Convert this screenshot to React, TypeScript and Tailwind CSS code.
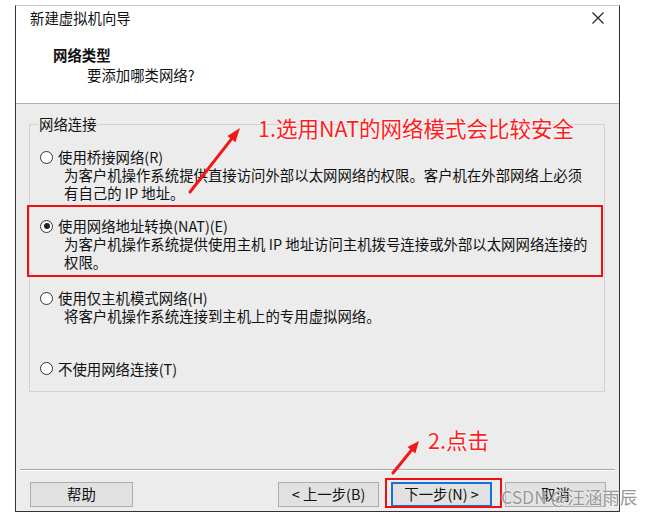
import React from 'react';

const font = "font-['Noto_Sans_CJK_SC','Noto_Sans',sans-serif]";

const Radio: React.FC<{ checked?: boolean }> = ({ checked }) => (
  <span className="w-[13px] h-[13px] rounded-full border border-[#333] bg-white flex items-center justify-center shrink-0">
    {checked && <span className="w-[6px] h-[6px] rounded-full bg-[#222]"></span>}
  </span>
);

const Option: React.FC<{ label: string; desc?: React.ReactNode; checked?: boolean }> = ({ label, desc, checked }) => (
  <div>
    <div className="flex items-center gap-[5px] leading-[16px]">
      <Radio checked={checked} />
      <span>{label}</span>
    </div>
    {desc && <div className="pl-[24px] mt-[1px] leading-[17.5px]">{desc}</div>}
  </div>
);

const Button: React.FC<{ children: React.ReactNode; primary?: boolean; wide?: boolean }> = ({ children, primary, wide }) => (
  <div
    className={`h-[25px] flex items-center justify-center bg-[#e1e1e1] text-[#111] ${wide ? 'w-[103px]' : 'w-[101px]'} ${
      primary ? 'border-2 border-[#1473d6]' : 'border border-[#adadad]'
    }`}
  >
    {children}
  </div>
);

export default function App() {
  return (
    <div className={`relative w-[648px] h-[517px] bg-white overflow-hidden text-[14.4px] text-[#111] ${font}`}>
      {/* wizard window */}
      <div className="ml-[15px] mt-[5px] w-[605px] border-x border-b border-t border-[#333] border-t-[#c8c8c8] flex flex-col">
        {/* header */}
        <div className="h-[97px] bg-white relative">
          <div className="pl-[14px] pt-[2px] leading-[20px]">新建虚拟机向导</div>
          <svg className="absolute left-[576px] top-[6px]" width="12" height="12" viewBox="0 0 12 12">
            <path d="M0.5 0.5 L11.5 11.5 M11.5 0.5 L0.5 11.5" stroke="#222" strokeWidth="1.2" fill="none" />
          </svg>
          <div className="pl-[37px] mt-[17px] leading-[20px] font-bold">网络类型</div>
          <div className="pl-[71px] leading-[20px]">要添加哪类网络?</div>
        </div>
        <div className="h-px bg-[#b4b4b4]"></div>

        {/* body */}
        <div className="h-[407px] bg-[#ececec] flex flex-col">
          <fieldset className="ml-[13px] mt-[10px] w-[576px] border border-[#d2d2d2] pb-[14px]">
            <legend className="ml-[8px] px-[1px] leading-[20px]">网络连接</legend>
            <div className="pl-[10px] pt-[15px]">
              <Option
                label="使用桥接网络(R)"
                desc={
                  <>
                    为客户机操作系统提供直接访问外部以太网网络的权限。客户机在外部网络上必须
                    <br />
                    有自己的 IP 地址。
                  </>
                }
              />
            </div>
            <div className="ml-[-3px] mt-[4px] w-[576px] border-2 border-[#f01010] pl-[11px] pt-[11px] pb-[5px]">
              <Option
                checked
                label="使用网络地址转换(NAT)(E)"
                desc={
                  <>
                    为客户机操作系统提供使用主机 IP 地址访问主机拨号连接或外部以太网网络连接的
                    <br />
                    权限。
                  </>
                }
              />
            </div>
            <div className="pl-[10px] mt-[13px]">
              <Option label="使用仅主机模式网络(H)" desc="将客户机操作系统连接到主机上的专用虚拟网络。" />
            </div>
            <div className="pl-[10px] mt-[36px]">
              <Option label="不使用网络连接(T)" />
            </div>
          </fieldset>

          <div className="mx-[4px] mt-[77px] h-px bg-[#a8a8a8]"></div>
          <div className="h-px mx-[4px] bg-white"></div>

          <div className="flex items-center mt-[11px] pl-[14px] pr-[13px]">
            <Button wide>帮助</Button>
            <div className="flex-1"></div>
            <Button>&lt; 上一步(B)</Button>
            <div className="relative ml-[12px]">
              <Button primary>下一步(N) &gt;</Button>
              <div className="absolute left-[-6px] right-[-10px] top-[-4px] bottom-[-1px] border-2 border-[#f01010] pointer-events-none"></div>
            </div>
            <div className="ml-[13px]">
              <Button>取消</Button>
            </div>
          </div>
        </div>
      </div>

      {/* annotations */}
      <svg className="absolute inset-0 pointer-events-none" width="648" height="517">
        <line x1="190" y1="192" x2="231.4" y2="139.1" stroke="#f01818" strokeWidth="3" strokeLinecap="round" />
        <polygon points="240,128 235.4,142.2 227.4,136" fill="#f01818" />
        <line x1="393" y1="473" x2="411.4" y2="450.3" stroke="#f01818" strokeWidth="3" strokeLinecap="round" />
        <polygon points="419,441 415.3,453.5 407.5,447.1" fill="#f01818" />
      </svg>
      <div className="absolute left-[258px] top-[113px] text-[21.5px] leading-[30px] text-[#ff1e1e] [text-shadow:0_0_3px_#fff,0_0_2px_#fff]">
        1.选用NAT的网络模式会比较安全
      </div>
      <div className="absolute left-[428px] top-[425px] text-[21.5px] leading-[30px] text-[#ff1e1e] [text-shadow:0_0_3px_#fff,0_0_2px_#fff]">
        2.点击
      </div>
      <div className="absolute left-[501px] top-[485px] text-[17.5px] leading-[24px] text-[#999] [text-shadow:0_0_2px_#fff]">
        CSDN @汪涵雨辰
      </div>
    </div>
  );
}
